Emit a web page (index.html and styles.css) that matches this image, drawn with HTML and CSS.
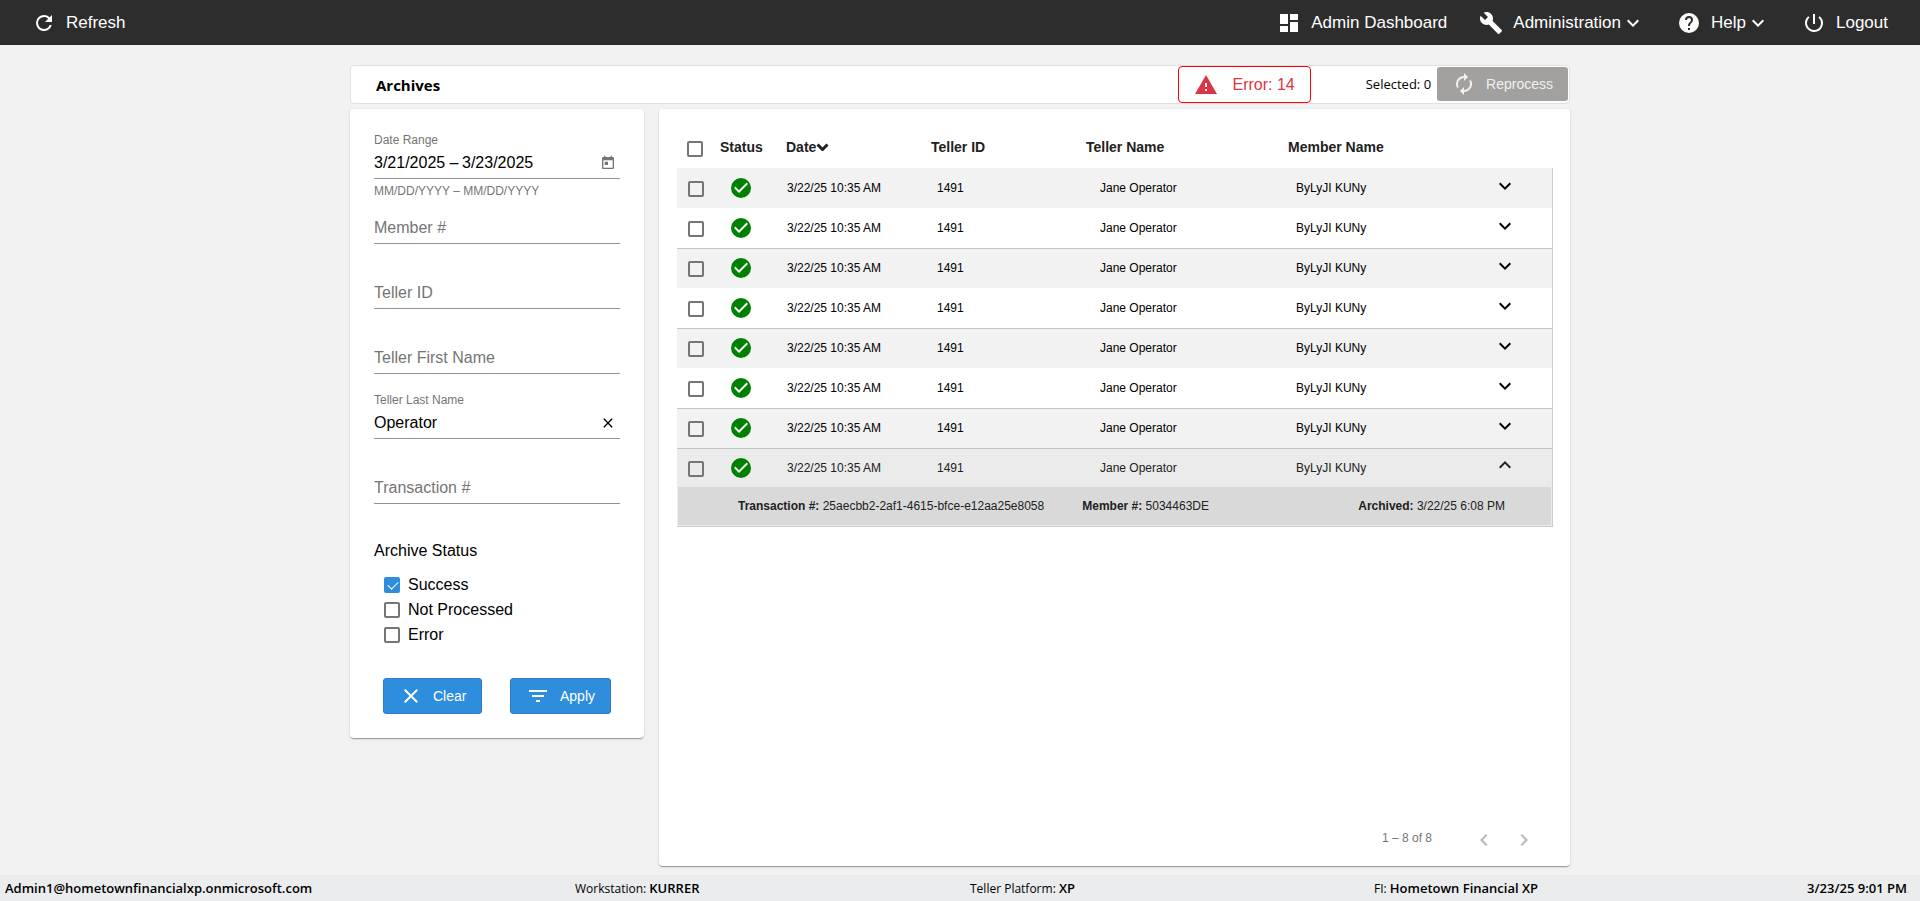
FILE: index.html
```html
<!DOCTYPE html>
<html lang="en">
<head>
  <meta charset="UTF-8">
  <meta name="viewport" content="width=device-width, initial-scale=1.0">
  <title>Archives</title>
  <link rel="stylesheet" href="styles.css">
</head>
<body>
  <!-- icon sprite -->
  <svg class="sprite" aria-hidden="true">
    <symbol id="refresh" viewBox="0 0 24 24"><path d="M17.65 6.35A7.96 7.96 0 0 0 12 4a8 8 0 1 0 7.73 10h-2.08A6 6 0 1 1 12 6c1.66 0 3.14.69 4.22 1.78L13 11h7V4z"/></symbol>
    <symbol id="dashboard" viewBox="0 0 24 24"><path d="M3 13h8V3H3zm0 8h8v-6H3zm10 0h8V11h-8zm0-18v6h8V3z"/></symbol>
    <symbol id="build" viewBox="0 0 24 24"><path d="M22.7 19l-9.1-9.1c.9-2.3.4-5-1.5-6.9-2-2-5-2.4-7.4-1.3L9 6 6 9 1.6 4.7C.4 7.1.9 10.1 2.9 12.1c1.9 1.9 4.6 2.4 6.9 1.5l9.1 9.1c.4.4 1 .4 1.4 0l2.3-2.3c.5-.4.5-1.1.1-1.4z"/></symbol>
    <symbol id="help" viewBox="0 0 24 24"><path d="M12 2a10 10 0 1 0 0 20 10 10 0 0 0 0-20zm1 17h-2v-2h2zm2.07-7.75l-.9.92C13.45 12.9 13 13.5 13 15h-2v-.5c0-1.1.45-2.1 1.17-2.83l1.24-1.26c.37-.36.59-.86.59-1.41a2 2 0 1 0-4 0H8a4 4 0 1 1 8 0c0 .88-.36 1.68-.93 2.25z"/></symbol>
    <symbol id="power" viewBox="0 0 24 24"><path d="M13 3h-2v10h2zm4.83 2.17l-1.42 1.42A6.92 6.92 0 0 1 19 12a7 7 0 1 1-11.42-5.42L6.17 5.17A8.93 8.93 0 0 0 3 12a9 9 0 1 0 14.83-6.83z"/></symbol>
    <symbol id="down" viewBox="0 0 24 24"><path d="M7.41 8.59L12 13.17l4.59-4.58L18 10l-6 6-6-6z"/></symbol>
    <symbol id="up" viewBox="0 0 24 24"><path d="M7.41 15.41L12 10.83l4.59 4.58L18 14l-6-6-6 6z"/></symbol>
    <symbol id="warning" viewBox="0 0 24 24"><path d="M1 21h22L12 2zm12-3h-2v-2h2zm0-4h-2v-4h2z"/></symbol>
    <symbol id="autorenew" viewBox="0 0 24 24"><path d="M12 6v3l4-4-4-4v3a8 8 0 0 0-6.76 12.26L6.7 14.8A5.87 5.87 0 0 1 6 12a6 6 0 0 1 6-6zm6.76 1.74L17.3 9.2c.44.84.7 1.79.7 2.8a6 6 0 0 1-6 6v-3l-4 4 4 4v-3a8 8 0 0 0 6.76-12.26z"/></symbol>
    <symbol id="today" viewBox="0 0 24 24"><path d="M19 3h-1V1h-2v2H8V1H6v2H5a2 2 0 0 0-2 2v14c0 1.1.9 2 2 2h14a2 2 0 0 0 2-2V5a2 2 0 0 0-2-2zm0 16H5V8h14zM7 10h5v5H7z"/></symbol>
    <symbol id="close" viewBox="0 0 24 24"><path d="M19 6.41L17.59 5 12 10.59 6.41 5 5 6.41 10.59 12 5 17.59 6.41 19 12 13.41 17.59 19 19 17.59 13.41 12z"/></symbol>
    <symbol id="filter" viewBox="0 0 24 24"><path d="M10 18h4v-2h-4zM3 6v2h18V6zm3 7h12v-2H6z"/></symbol>
    <symbol id="check-circle" viewBox="0 0 24 24"><path d="M12 2a10 10 0 1 0 0 20 10 10 0 0 0 0-20zm-2 15l-5-5 1.41-1.41L10 14.17l7.59-7.59L19 8z"/></symbol>
    <symbol id="left" viewBox="0 0 24 24"><path d="M15.41 7.41L14 6l-6 6 6 6 1.41-1.41L10.83 12z"/></symbol>
    <symbol id="right" viewBox="0 0 24 24"><path d="M10 6L8.59 7.41 13.17 12l-4.58 4.59L10 18l6-6z"/></symbol>
  </svg>

  <header class="topbar">
    <button class="nav-btn"><svg class="icon"><use href="#refresh"/></svg>Refresh</button>
    <nav class="nav">
      <button class="nav-btn"><svg class="icon"><use href="#dashboard"/></svg>Admin Dashboard</button>
      <button class="nav-btn nav-menu"><svg class="icon"><use href="#build"/></svg>Administration<svg class="icon caret"><use href="#down"/></svg></button>
      <button class="nav-btn nav-menu"><svg class="icon"><use href="#help"/></svg>Help<svg class="icon caret"><use href="#down"/></svg></button>
      <button class="nav-btn"><svg class="icon"><use href="#power"/></svg>Logout</button>
    </nav>
  </header>

  <main class="page">
    <div class="titlebar">
      <h1>Archives</h1>
      <button class="error-btn"><svg class="icon"><use href="#warning"/></svg>Error: 14</button>
      <div class="reprocess">
        <span class="selected">Selected: 0</span>
        <button class="btn btn-reprocess" disabled><svg class="icon"><use href="#autorenew"/></svg>Reprocess</button>
      </div>
    </div>

    <div class="columns">
      <form class="card filters">
        <div class="field">
          <label for="startDate">Date Range</label>
          <div class="control">
            <input type="text" id="startDate" class="date" value="3/21/2025" aria-label="Start date">
            <span class="dash">–</span>
            <input type="text" id="endDate" class="date" value="3/23/2025" aria-label="End date">
            <button type="button" class="icon-btn calendar" aria-label="Open calendar"><svg class="icon small"><use href="#today"/></svg></button>
          </div>
          <div class="hint">MM/DD/YYYY – MM/DD/YYYY</div>
        </div>
        <div class="field">
          <div class="control"><input type="text" placeholder="Member #" aria-label="Member #"></div>
        </div>
        <div class="field">
          <div class="control"><input type="text" placeholder="Teller ID" aria-label="Teller ID"></div>
        </div>
        <div class="field">
          <div class="control"><input type="text" placeholder="Teller First Name" aria-label="Teller First Name"></div>
        </div>
        <div class="field">
          <label for="lastName">Teller Last Name</label>
          <div class="control">
            <input type="text" id="lastName" value="Operator">
            <button type="button" class="icon-btn" aria-label="Clear last name"><svg class="icon small"><use href="#close"/></svg></button>
          </div>
        </div>
        <div class="field">
          <div class="control"><input type="text" placeholder="Transaction #" aria-label="Transaction #"></div>
        </div>

        <fieldset class="status">
          <legend>Archive Status</legend>
          <label><input type="checkbox" checked>Success</label>
          <label><input type="checkbox">Not Processed</label>
          <label><input type="checkbox">Error</label>
        </fieldset>

        <div class="actions">
          <button type="button" class="btn btn-primary"><svg class="icon"><use href="#close"/></svg>Clear</button>
          <button type="button" class="btn btn-primary"><svg class="icon"><use href="#filter"/></svg>Apply</button>
        </div>
      </form>

      <section class="card results">
        <table>
          <colgroup>
            <col class="c-check"><col class="c-status"><col class="c-date"><col class="c-id"><col class="c-teller"><col class="c-member"><col class="c-toggle">
          </colgroup>
          <thead>
            <tr>
              <th><input type="checkbox" aria-label="Select all"></th>
              <th>Status</th>
              <th><span class="sort">Date<svg class="sort-icon" viewBox="0 0 12 8"><path d="M1 1.5l5 5 5-5"/></svg></span></th>
              <th>Teller ID</th>
              <th>Teller Name</th>
              <th>Member Name</th>
              <th></th>
            </tr>
          </thead>
          <tbody id="rows"></tbody>
        </table>

        <div class="paginator">
          <span>1 – 8 of 8</span>
          <button class="icon-btn" aria-label="Previous page" disabled><svg class="icon"><use href="#left"/></svg></button>
          <button class="icon-btn" aria-label="Next page" disabled><svg class="icon"><use href="#right"/></svg></button>
        </div>
      </section>
    </div>
  </main>

  <footer class="footer">
    <b>Admin1@hometownfinancialxp.onmicrosoft.com</b>
    <span>Workstation: <b>KURRER</b></span>
    <span>Teller Platform: <b>XP</b></span>
    <span>FI: <b>Hometown Financial XP</b></span>
    <span class="clock"><b>3/23/25 9:01 PM</b><i>.</i></span>
  </footer>

  <script>
    const total = 8;
    const openRow = 7;
    let html = '';

    for (let i = 0; i < total; i++) {
      const open = i === openRow;
      html += `
        <tr class="${open ? 'row open' : 'row'}">
          <td><input type="checkbox" aria-label="Select row ${i + 1}"></td>
          <td class="ok"><svg class="icon"><use href="#check-circle"/></svg></td>
          <td class="date-cell">3/22/25 10:35 AM</td>
          <td class="id-cell">1491</td>
          <td class="teller-cell">Jane Operator</td>
          <td class="member-cell">ByLyJI KUNy</td>
          <td class="toggle-cell"><button class="icon-btn" aria-label="Details"><svg class="icon"><use href="#${open ? 'up' : 'down'}"/></svg></button></td>
        </tr>`;
      if (open) {
        html += `
        <tr class="detail">
          <td colspan="7">
            <div class="detail-box">
              <span><b>Transaction #:</b> 25aecbb2-2af1-4615-bfce-e12aa25e8058</span>
              <span><b>Member #:</b> 5034463DE</span>
              <span class="archived"><b>Archived:</b> 3/22/25 6:08 PM</span>
            </div>
          </td>
        </tr>`;
      }
    }

    document.getElementById('rows').innerHTML = html;
  </script>
</body>
</html>
```
FILE: styles.css
```css
* {
  box-sizing: border-box;
}
body {
  margin: 0;
  min-height: 100vh;
  display: flex;
  flex-direction: column;
  font-family: Arial, "Liberation Sans", sans-serif;
  font-size: 16px;
  color: #000;
  background-color: #f2f2f2;
}
button, input {
  font-family: inherit;
  font-size: inherit;
  color: inherit;
}
button {
  border: none;
  background: none;
  padding: 0;
}
.sprite {
  display: none;
}
.icon {
  width: 24px;
  height: 24px;
  fill: currentColor;
  flex: none;
}
.icon.small {
  width: 16px;
  height: 16px;
}
.icon-btn {
  display: flex;
  align-items: center;
  justify-content: center;
}

/* top bar */
.topbar {
  height: 45px;
  padding: 0 32px;
  display: flex;
  align-items: center;
  justify-content: space-between;
  background: #2d2d2d;
  color: #fff;
  font-size: 17px;
}
.nav {
  display: flex;
  gap: 32px;
}
.nav-btn {
  display: flex;
  align-items: center;
  gap: 10px;
}
.nav-menu .caret {
  margin-left: -10px;
}

/* page */
.page {
  flex: 1;
  width: 100%;
  max-width: 1220px;
  margin: 0 auto;
  padding: 20px 0 9px;
  display: flex;
  flex-direction: column;
  gap: 5px;
}
.titlebar {
  height: 39px;
  padding: 0 1px 0 25px;
  display: flex;
  align-items: center;
  background: #fff;
  border: 1px solid #e0e0e0;
  border-radius: 4px;
}
h1 {
  flex: 1;
  margin: 0;
  font-family: "Segoe UI", "Open Sans", sans-serif;
  font-size: 15px;
  font-weight: bold;
}
.error-btn {
  height: 37px;
  padding: 0 15px;
  display: flex;
  align-items: center;
  gap: 14px;
  border: 1px solid #f00;
  border-radius: 4px;
  color: #dc3545;
}
.reprocess {
  display: flex;
  align-items: center;
  gap: 6px;
  padding: 0 0 2px 55px;
}
.selected {
  font-family: "Segoe UI", "Open Sans", sans-serif;
  font-size: 13px;
}
.btn {
  display: flex;
  align-items: center;
  border-radius: 3px;
  font-size: 14px;
  color: #fff;
}
.btn-reprocess {
  height: 34px;
  padding: 0 15px;
  gap: 10px;
  background: #a2a19f;
  color: #f0f0f0;
}
.columns {
  flex: 1;
  display: flex;
  align-items: flex-start;
  gap: 15px;
}
.card {
  background: #fff;
  border-radius: 4px;
  box-shadow: 0 2px 1px -1px rgba(0,0,0,0.2), 0 1px 1px 0 rgba(0,0,0,0.14), 0 1px 3px 0 rgba(0,0,0,0.12);
}

/* filters */
.filters {
  width: 294px;
  padding: 25px 24px 24px;
}
.field {
  height: 65px;
  padding-top: 14px;
}
.field > label {
  display: block;
  height: 14px;
  margin-top: -14px;
  font-size: 12px;
  line-height: 13px;
  color: #757575;
}
.control {
  height: 31px;
  display: flex;
  align-items: center;
  border-bottom: 1px solid #949494;
}
.control input {
  flex: 1;
  min-width: 0;
  padding: 0;
  border: none;
  outline: none;
  background: none;
}
.control input.date {
  flex: none;
  width: 72px;
}
.control input::placeholder {
  color: #757575;
  opacity: 1;
}
.control .icon-btn {
  width: 24px;
  height: 24px;
}
.dash {
  width: 16px;
  text-align: center;
}
.control .calendar {
  margin-left: auto;
  color: #757575;
}
.hint {
  font-size: 12px;
  line-height: 24px;
  color: #757575;
}
.status {
  margin: 0;
  padding: 0;
  border: none;
}
.status legend {
  padding: 17px 0 11px;
  line-height: 20px;
}
.status label {
  display: flex;
  align-items: center;
  gap: 8px;
  height: 25px;
  padding-left: 10px;
}
input[type="checkbox"] {
  appearance: none;
  flex: none;
  width: 16px;
  height: 16px;
  margin: 0;
  border: 2px solid #757575;
  border-radius: 2px;
}
input[type="checkbox"]:checked {
  position: relative;
  border-color: #2f8ddd;
  background: #2f8ddd;
}
input[type="checkbox"]:checked::after {
  content: "";
  position: absolute;
  left: 4px;
  top: 0;
  width: 5px;
  height: 9px;
  border: solid #fff;
  border-width: 0 1px 1px 0;
  transform: rotate(45deg);
}
.actions {
  display: flex;
  justify-content: space-between;
  padding: 31px 9px 0;
}
.btn-primary {
  height: 36px;
  padding: 0 15px;
  gap: 10px;
  background: #2f8ddd;
  border: 1px solid #2b7fc6;
}

/* results */
.results {
  flex: 1;
  align-self: stretch;
  display: flex;
  flex-direction: column;
  justify-content: space-between;
  padding: 11px 17px 8px 18px;
}
table {
  width: 100%;
  table-layout: fixed;
  border-collapse: separate;
  border-spacing: 0;
  font-size: 12px;
}
.c-check { width: 43px; }
.c-status { width: 66px; }
.c-date { width: 145px; }
.c-id { width: 155px; }
.c-teller { width: 202px; }
.c-toggle { width: 73px; }
th {
  height: 48px;
  padding: 6px 0 0;
  text-align: left;
  font-size: 14px;
  color: #212121;
}
th input, td input {
  display: block;
}
th:first-child {
  padding: 9px 0 0 10px;
}
.sort {
  display: flex;
  align-items: center;
}
.sort-icon {
  width: 13px;
  height: 8px;
  fill: none;
  stroke: #212121;
  stroke-width: 3px;
}
td {
  height: 40px;
  padding: 0;
}
.row td:first-child {
  padding: 2px 0 0 11px;
}
.row td:last-child {
  border-right: 1px solid #ccc;
}
.row:nth-child(odd) {
  background: #f2f2f2;
}
.row:nth-child(n+3):nth-child(odd) td, .row:nth-child(8) td {
  box-shadow: inset 0 1px #c4c4c4;
}
.row.open {
  background: #ebebeb;
  color: #212121;
}
.row.open td {
  height: 39px;
}
.ok {
  color: #008000;
}
.ok .icon {
  display: block;
  margin-left: 9px;
}
.date-cell { padding-left: 1px; }
.id-cell { padding-left: 6px; }
.teller-cell { padding-left: 14px; }
.member-cell { padding-left: 8px; }
.toggle-cell .icon-btn {
  margin: 0 35px 5px auto;
}
.detail td {
  height: 40px;
  padding: 0 1px 1px;
  background: #ebebeb;
  border-bottom: 1px solid #ccc;
  border-right: 1px solid #ccc;
}
.detail-box {
  height: 38px;
  padding: 0 46px 0 60px;
  display: flex;
  align-items: center;
  gap: 38px;
  background: #d9d9d9;
  color: #212121;
}
.archived {
  margin-left: auto;
}
.paginator {
  display: flex;
  align-items: center;
  justify-content: flex-end;
  padding-right: 9px;
  font-size: 12px;
  color: #757575;
}
.paginator span {
  margin-right: 32px;
}
.paginator .icon-btn {
  width: 40px;
  height: 40px;
  padding-top: 4px;
  color: #b8b8b8;
}

/* footer */
.footer {
  height: 26px;
  padding: 0 10px 0 5px;
  display: grid;
  grid-template-columns: 570fr 395fr 404fr 431fr 105fr;
  align-items: center;
  background: #ebecee;
  font-family: "Segoe UI", "Open Sans", sans-serif;
  font-size: 12px;
  white-space: nowrap;
}
.footer b {
  font-size: 13px;
  font-weight: 600;
}
.clock {
  justify-self: end;
}
.clock i {
  color: #c8c8c8;
}
```
